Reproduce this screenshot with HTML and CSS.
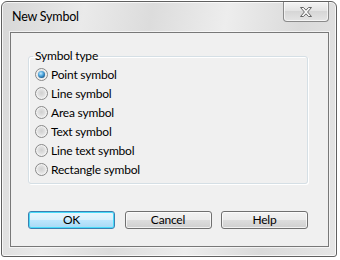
FILE: index.html
```html
<!DOCTYPE html>
<html lang="en">
<head>
    <meta charset="UTF-8">
    <title>New Symbol</title>
    <link rel="stylesheet" href="styles.css">
</head>
<body>
    <div class="window">
        <div class="titlebar">
            <span class="title">New Symbol</span>
            <button class="close" title="Close">
                <svg width="12" height="10" viewBox="0 0 12 10">
                    <polygon points="0.5,0.5 3.5,0.5 6,3.2 8.5,0.5 11.5,0.5 7.6,5 11.5,9.5 8.5,9.5 6,6.8 3.5,9.5 0.5,9.5 4.4,5" fill="#f7f7f7" stroke="#666666" stroke-width="1" stroke-linejoin="round"/>
                </svg>
            </button>
        </div>

        <div class="client">
            <fieldset class="group">
                <legend>Symbol type</legend>
                <label class="option"><span class="radio checked"></span>Point symbol</label>
                <label class="option"><span class="radio"></span>Line symbol</label>
                <label class="option"><span class="radio"></span>Area symbol</label>
                <label class="option"><span class="radio"></span>Text symbol</label>
                <label class="option"><span class="radio"></span>Line text symbol</label>
                <label class="option"><span class="radio"></span>Rectangle symbol</label>
            </fieldset>

            <div class="buttons">
                <button class="btn default">OK</button>
                <button class="btn">Cancel</button>
                <button class="btn">Help</button>
            </div>
        </div>
    </div>
</body>
</html>
```

FILE: styles.css
```css
body {
    margin: 0;
    background: #ffffff;
    font-family: Lato, "Noto Sans", sans-serif;
    font-size: 12px;
    letter-spacing: -0.2px;
    color: #000000;
}

.window {
    box-sizing: border-box;
    width: 336px;
    height: 256px;
    margin: 1px 0 0 1px;
    padding: 0 7px 9px 8px;
    display: flex;
    flex-direction: column;
    border: 1px solid #606060;
    border-radius: 6px 6px 3px 3px;
    background: linear-gradient(100deg, #d6d6d6 0%, #eaeaea 22%, #dcdcdc 40%, #ededed 60%, #dadada 80%, #e6e6e6 100%);
    box-shadow: inset 0 0 0 1px rgba(255, 255, 255, 0.75);
}

.titlebar {
    height: 30px;
    display: flex;
    align-items: flex-start;
}

.title {
    margin: 7px 0 0 2px;
    line-height: 16px;
    font-size: 12.5px;
}

.close {
    margin-left: auto;
    width: 46px;
    height: 20px;
    padding: 0;
    display: flex;
    justify-content: center;
    align-items: center;
    border: 1px solid #8a8a8a;
    border-top: none;
    border-radius: 0 0 4px 4px;
    background: linear-gradient(#f4f4f4, #e2e2e2 50%, #d6d6d6 50%, #e4e4e4);
    box-shadow: inset 0 0 0 1px rgba(255, 255, 255, 0.6);
}

.client {
    flex: 1;
    padding: 16px 0 0 17px;
    border: 1px solid #787878;
    background: #f0f0f0;
    box-shadow: 0 0 0 1px rgba(255, 255, 255, 0.6);
}

.group {
    box-sizing: border-box;
    width: 280px;
    margin: 0;
    padding: 2px 6px 4px 6px;
    border: 1px solid #d5dfe5;
    border-radius: 3px;
    box-shadow: inset 1px 1px 0 #ffffff, 1px 1px 0 #ffffff;
}

.group legend {
    margin-left: -2px;
    padding: 0 2px;
    line-height: 14px;
}

.option {
    height: 19px;
    display: flex;
    align-items: center;
}

.radio {
    box-sizing: border-box;
    width: 13px;
    height: 13px;
    margin-right: 3px;
    display: flex;
    justify-content: center;
    align-items: center;
    border: 1px solid #888888;
    border-radius: 50%;
    background: radial-gradient(circle at 50% 45%, #cfcfcf 0%, #e2e2e2 45%, #f6f6f6 80%);
    box-shadow: inset 0 0 0 1px #f2f2f2;
}

.radio.checked::after {
    content: "";
    width: 7px;
    height: 7px;
    border-radius: 50%;
    background: radial-gradient(circle at 40% 35%, #c6ecff 0%, #4fa6dd 40%, #1b5f93 75%, #123f63 100%);
}

.buttons {
    width: 280px;
    margin-top: 27px;
    display: flex;
    justify-content: space-between;
}

.btn {
    box-sizing: border-box;
    width: 87px;
    height: 18px;
    padding: 0;
    font-family: inherit;
    font-size: 12px;
    letter-spacing: inherit;
    line-height: 16px;
    color: #000000;
    border: 1px solid #707070;
    border-radius: 3px;
    background: linear-gradient(#f2f2f2 0%, #ebebeb 50%, #dddddd 50%, #cfcfcf 100%);
    box-shadow: inset 0 0 0 1px rgba(255, 255, 255, 0.7);
}

.btn.default {
    border-color: #3c7fb1;
    background: linear-gradient(#eaf6fd 0%, #d9f0fc 50%, #bee6fd 50%, #a7d9f5 100%);
    box-shadow: inset 0 0 0 1px #48dbf9;
}
```
